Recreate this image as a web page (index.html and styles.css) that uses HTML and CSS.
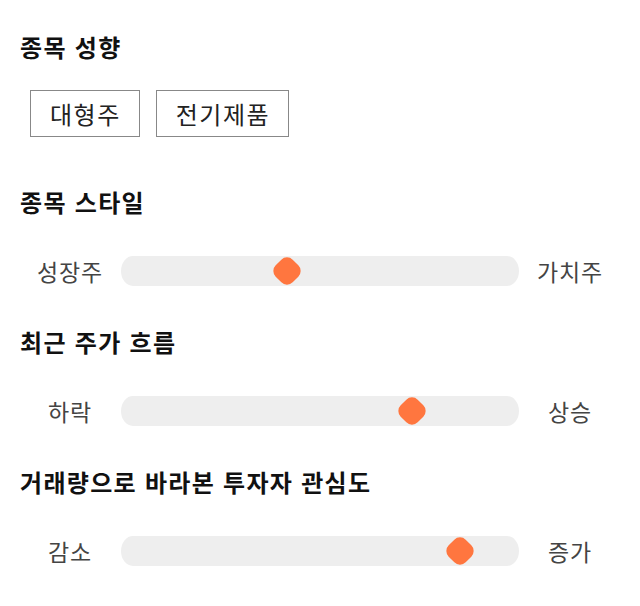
FILE: index.html
```html
<!DOCTYPE html>
<html lang="ko">
<head>
    <meta charset="UTF-8">
    <meta name="viewport" content="width=device-width, initial-scale=1.0">
    <title>종목 성향</title>
    <link rel="stylesheet" href="styles.css">
</head>
<body>
    <div class="container">
        <section class="section">
            <h2 class="title">종목 성향</h2>
            <div class="tags">
                <span class="tag">대형주</span>
                <span class="tag">전기제품</span>
            </div>
        </section>

        <section class="section">
            <h2 class="title">종목 스타일</h2>
            <div class="slider-row">
                <span class="label">성장주</span>
                <div class="track"><span class="thumb" style="left: 41.8%"></span></div>
                <span class="label">가치주</span>
            </div>
        </section>

        <section class="section">
            <h2 class="title">최근 주가 흐름</h2>
            <div class="slider-row">
                <span class="label">하락</span>
                <div class="track"><span class="thumb" style="left: 73%"></span></div>
                <span class="label">상승</span>
            </div>
        </section>

        <section class="section">
            <h2 class="title">거래량으로 바라본 투자자 관심도</h2>
            <div class="slider-row">
                <span class="label">감소</span>
                <div class="track"><span class="thumb" style="left: 85.1%"></span></div>
                <span class="label">증가</span>
            </div>
        </section>
    </div>
</body>
</html>
```

FILE: styles.css
```css
body {
    margin: 0;
    font-family: "Noto Sans CJK KR", "Noto Sans", sans-serif;
    background-color: #fff;
    color: #111;
}
.container {
    padding: 32px 20px 0 20px;
}
.section {
    margin-bottom: 41px;
}
.section:first-child {
    margin-bottom: 50px;
}
.title {
    margin: 0 0 39px 0;
    font-size: 24px;
    font-weight: 700;
    line-height: 30px;
    letter-spacing: 1.3px;
}
.section:first-child .title {
    margin-bottom: 28px;
}
.tags {
    display: flex;
    gap: 16px;
    padding-left: 10px;
}
.tag {
    display: flex;
    align-items: center;
    height: 45px;
    padding: 0 18px 0 19px;
    border: 1px solid #888;
    font-size: 24px;
    letter-spacing: 1.5px;
    color: #222;
}
.slider-row {
    display: grid;
    grid-template-columns: 100px 1fr 100px;
    column-gap: 1px;
    align-items: center;
}
.label {
    text-align: center;
    font-size: 23px;
    line-height: 30px;
    letter-spacing: 0.8px;
    color: #444;
}
.track {
    position: relative;
    height: 30px;
    background-color: #eee;
    border-radius: 12px / 15px;
}
.thumb {
    position: absolute;
    top: 50%;
    width: 24px;
    height: 24px;
    background-color: #ff763f;
    border-radius: 8px;
    transform: translate(-50%, -50%) rotate(45deg);
}
```
